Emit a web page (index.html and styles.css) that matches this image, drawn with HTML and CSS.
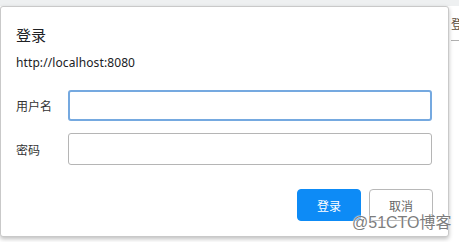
FILE: index.html
```html
<!DOCTYPE html>
<html>
<head>
<meta charset="utf-8">
<link rel="stylesheet" href="styles.css">
</head>
<body>
<div class="topbar"></div>
<div class="stage">
  <div class="dialog">
    <div class="title">登录</div>
    <div class="origin">http://localhost:8080</div>
    <div class="row first">
      <label class="label">用户名</label>
      <div class="input focused"></div>
    </div>
    <div class="row second">
      <label class="label">密码</label>
      <div class="input"></div>
    </div>
    <div class="actions">
      <button class="btn primary">登录</button>
      <button class="btn">取消</button>
    </div>
    <div class="watermark">@51CTO博客</div>
  </div>
  <div class="side">
    <div class="side-text">登</div>
    <div class="side-line"></div>
  </div>
</div>
</body>
</html>
```

FILE: styles.css
```css
html, body {
  margin: 0;
  padding: 0;
  background: #ffffff;
  width: 459px;
  height: 242px;
  overflow: hidden;
  font-family: "Noto Sans", "Noto Sans CJK SC", sans-serif;
}
.topbar {
  height: 6px;
  background: #eef0f1;
}
.stage {
  display: flex;
  align-items: flex-start;
}
.dialog {
  position: relative;
  width: 417px;
  padding: 18px 15px 15px 15px;
  border: 1px solid #c9c9c9;
  border-radius: 3px;
  box-shadow: 0 2px 4px rgba(0,0,0,0.25);
  background: #fff;
  flex: none;
}
.title {
  font-family: "Noto Sans CJK SC", sans-serif;
  font-size: 15px;
  line-height: 20px;
  color: #202124;
}
.origin {
  margin-top: 10px;
  font-size: 12px;
  line-height: 16px;
  color: #202124;
  letter-spacing: 0.1px;
}
.row {
  display: flex;
  align-items: center;
  height: 32px;
}
.row.first { margin-top: 18px; }
.row.second { margin-top: 12px; }
.label {
  width: 52px;
  font-family: "Noto Sans CJK SC", sans-serif;
  font-size: 12px;
  color: #333;
  flex: none;
}
.input {
  box-sizing: border-box;
  width: 364px;
  height: 32px;
  border: 1px solid #b5b5b5;
  border-radius: 3px;
}
.input.focused {
  border: 2px solid #75a9e0;
  height: 31px;
}
.actions {
  margin-top: 24px;
  display: flex;
  justify-content: flex-end;
  gap: 8px;
}
.btn {
  box-sizing: border-box;
  width: 64px;
  height: 32px;
  border: 1px solid #b8b8b8;
  border-radius: 4px;
  background: #fff;
  color: #666;
  font-family: "Noto Sans CJK SC", sans-serif;
  font-size: 12px;
  padding: 0;
}
.btn.primary {
  background: #0d8bf6;
  border-color: #0d8bf6;
  color: #fff;
}
.watermark {
  position: absolute;
  left: 351px;
  top: 206px;
  font-family: "Liberation Sans", "Noto Sans CJK SC", sans-serif;
  font-size: 16px;
  line-height: 20px;
  color: #7d7d7d;
  text-shadow: 0 0 1px #fff, 0 0 1px #fff, 0 0 2px #fff;
  white-space: nowrap;
}
.side {
  flex: 1;
  overflow: hidden;
  padding-left: 2px;
}
.side-text {
  margin-top: 11px;
  font-family: "Noto Sans CJK SC", sans-serif;
  font-size: 12px;
  line-height: 14px;
  color: #5a4a3a;
  white-space: nowrap;
}
.side-line {
  margin-top: 9px;
  height: 1px;
  background: #b0b0b0;
}
```
